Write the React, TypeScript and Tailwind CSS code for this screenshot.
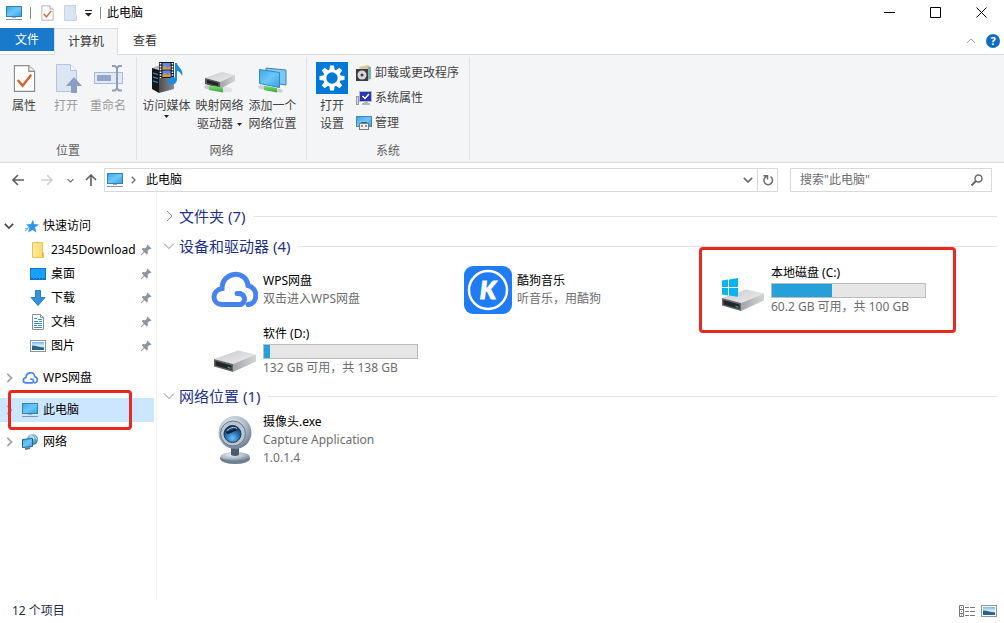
import type { ReactNode } from "react";
import clsx from "clsx";

type IconProps = { className?: string };

const Gradients = () => (
  <svg className="absolute w-0 h-0" aria-hidden="true">
    <defs>
      <linearGradient id="screen" x1="0" y1="0" x2="1" y2="1">
        <stop offset="0" stopColor="#3aa5ec" />
        <stop offset="0.5" stopColor="#6cc8f8" />
        <stop offset="1" stopColor="#35a0e6" />
      </linearGradient>
      <linearGradient id="driveTop" x1="0" y1="0" x2="1" y2="1">
        <stop offset="0" stopColor="#c9c9cb" />
        <stop offset="1" stopColor="#efeff0" />
      </linearGradient>
      <linearGradient id="driveSide" x1="0" y1="0" x2="1" y2="0">
        <stop offset="0" stopColor="#a4a5a8" />
        <stop offset="1" stopColor="#d3d4d6" />
      </linearGradient>
      <linearGradient id="pipe" x1="0" y1="0" x2="0" y2="1">
        <stop offset="0" stopColor="#86e07c" />
        <stop offset="1" stopColor="#2fa83a" />
      </linearGradient>
      <linearGradient id="folder" x1="0" y1="0" x2="1" y2="0">
        <stop offset="0" stopColor="#ffe9a0" />
        <stop offset="1" stopColor="#fbd867" />
      </linearGradient>
      <linearGradient id="photo" x1="0" y1="0" x2="0" y2="1">
        <stop offset="0" stopColor="#6db9ec" />
        <stop offset="0.5" stopColor="#dff1fa" />
        <stop offset="1" stopColor="#2a6a8c" />
      </linearGradient>
      <linearGradient id="tower" x1="0" y1="0" x2="1" y2="0">
        <stop offset="0" stopColor="#4a4d51" />
        <stop offset="1" stopColor="#8a8c90" />
      </linearGradient>
      <radialGradient id="camBody" cx="0.4" cy="0.3" r="0.75">
        <stop offset="0" stopColor="#eef3f7" />
        <stop offset="0.6" stopColor="#a9b6c3" />
        <stop offset="1" stopColor="#68798b" />
      </radialGradient>
      <radialGradient id="camLens" cx="0.5" cy="0.75" r="0.7">
        <stop offset="0" stopColor="#6cc1f5" />
        <stop offset="0.5" stopColor="#2a78bd" />
        <stop offset="1" stopColor="#12304f" />
      </radialGradient>
      <radialGradient id="globe" cx="0.4" cy="0.3" r="0.8">
        <stop offset="0" stopColor="#a9d8ee" />
        <stop offset="1" stopColor="#2a78a8" />
      </radialGradient>
    </defs>
  </svg>
);

const PcIcon = ({ className = "w-4 h-4" }: IconProps) => (
  <svg viewBox="0 0 16 16" className={className} aria-hidden="true">
    <rect x="0.5" y="1.5" width="15" height="10" fill="url(#screen)" stroke="#3a7fae" />
    <path d="M6 12h4v1H6z" fill="#8fb4cc" />
    <path d="M0 14.5h16" stroke="#7d97a8" />
  </svg>
);

const CheckPage = ({ className }: IconProps) => (
  <svg viewBox="0 0 24 30" className={className} aria-hidden="true">
    <path d="M1.5 1.5h15l6 6v21h-21z" fill="#fff" stroke="#8c8c8c" strokeWidth="1.2" />
    <path d="M16.5 1.5v6h6" fill="#eee" stroke="#8c8c8c" strokeWidth="1.2" />
    <path d="M5 16.5l5 6L19 11" fill="none" stroke="#e2622b" strokeWidth="2.6" />
  </svg>
);

const OpenIcon = () => (
  <svg viewBox="0 0 32 32" className="w-8 h-8" aria-hidden="true">
    <path d="M6.5 2.5h14l6 6v21h-20z" fill="#dce5f4" stroke="#b6c3dc" />
    <path d="M20.5 2.5v6h6" fill="#f3f6fb" stroke="#b6c3dc" />
    <path d="M24 15l8 9h-5v7h-6v-7h-5z" fill="#8d9fc1" />
  </svg>
);

const RenameIcon = () => (
  <svg viewBox="0 0 32 32" className="w-8 h-8" aria-hidden="true">
    <rect x="2.500" y="10.5" width="28" height="11" fill="#e3e9f4" stroke="#a9b8d3" />
    <rect x="5" y="13" width="14" height="6" fill="#93a5c8" />
    <path d="M20 4h3l2 2 2-2h3M25 5v22M20 28.500h3l2-2 2 2h3" fill="none" stroke="#8d9dbb" strokeWidth="2" />
  </svg>
);

const MediaIcon = () => (
  <svg viewBox="0 0 32 32" className="w-8 h-8" aria-hidden="true">
    <path d="M1 6l8-3 14 3-8 3z" fill="#b5b7ba" />
    <path d="M1 6l7 2v23l-7-4z" fill="#15171b" />
    <path d="M8 8h15v19L8 31z" fill="url(#tower)" />
    <path d="M2 11l5 1.500M2 15l5 1.500M2 19l5 1.500" stroke="#2f9de0" strokeWidth="1.2" />
    <rect x="8" y="0" width="15" height="16" fill="#15171b" />
    <path d="M9.500 1v15M21.500 1v15" stroke="#fff" strokeWidth="1.600" strokeDasharray="1.600 1.200" />
    <rect x="11.500" y="1" width="8" height="6.500" fill="#5b87e8" />
    <rect x="11.500" y="8.500" width="8" height="6.500" fill="#5b87e8" />
    <path d="M11.500 6l2-3 3 3 3-2v3.500h-8zM11.500 13l2-2 3 2 3-2v4h-8z" fill="#d59a3a" />
    <path d="M24 1h2c1 5 7 6 5 13-1-3-3-5-5-5v8c0 4-3 6-6 5.500s-4-3-2-5.500 4-2 6-1.500z" fill="#1b8de0" />
  </svg>
);

const MapDriveIcon = () => (
  <svg viewBox="0 0 32 32" className="w-8 h-8" aria-hidden="true">
    <path d="M1 16l17-6 13 3-15 7z" fill="url(#driveTop)" />
    <path d="M1 16l15 4v7L1 22z" fill="#55575a" />
    <path d="M3 18l11 3v3L3 21z" fill="#202224" />
    <path d="M16 20l15-7v6l-15 8z" fill="url(#driveSide)" />
    <path d="M2 25l20 3" stroke="#c5c8cb" strokeWidth="3.5" strokeLinecap="round" />
    <path d="M5 23.500l14 2v5L5 28z" fill="url(#pipe)" />
    <path d="M21 27l5 1" stroke="#dfe1e3" strokeWidth="4.500" strokeLinecap="round" />
  </svg>
);

const AddPlaceIcon = () => (
  <svg viewBox="0 0 32 32" className="w-8 h-8" aria-hidden="true">
    <path d="M9 6l20 2v15L9 20z" fill="#7cc9f5" stroke="#3b86ba" />
    <path d="M2.500 7.500l20 3v15l-20-4z" fill="url(#screen)" stroke="#3b86ba" />
    <path d="M3 25l21 4" stroke="#cdd0d2" strokeWidth="3.500" strokeLinecap="round" />
    <path d="M7 23.500l13 2.500v4.500L7 28z" fill="url(#pipe)" />
  </svg>
);

const SettingsIcon = () => (
  <svg viewBox="0 0 32 32" className="w-8 h-8" aria-hidden="true">
    <path d="M0 0h32v32H0z" fill="#0078d7" />
    <g transform="translate(16 16)">
      {[0, 45, 90, 135, 180, 225, 270, 315].map((deg) => (
        <path key={deg} d="M-2.800 -7l0.800 -5.500h4l0.800 5.500z" transform={`rotate(${deg})`} fill="#fff" />
      ))}
      <circle r="7.200" fill="none" stroke="#fff" strokeWidth="3" />
    </g>
  </svg>
);

const UninstallIcon = () => (
  <svg viewBox="0 0 16 16" className="w-4 h-4" aria-hidden="true">
    <path d="M3 2l9-2 3 2v12l-3 2z" fill="#d6c69a" />
    <path d="M12 2h3v12h-3z" fill="#7db4b0" />
    <rect x="0" y="4" width="12" height="12" fill="#3d3d3d" />
    <circle cx="6" cy="10" r="4.500" fill="#d9d9d9" />
    <circle cx="6" cy="10" r="1.500" fill="#3d3d3d" />
  </svg>
);

const SystemIcon = () => (
  <svg viewBox="0 0 16 16" className="w-4 h-4" aria-hidden="true">
    <rect x="0.500" y="6.500" width="2" height="8" fill="#d8d8d8" stroke="#9a9a9a" />
    <rect x="3.500" y="1.500" width="12" height="10" fill="#2a35b4" stroke="#b7bac2" />
    <path d="M6.500 6l2.500 2.500L13 4" fill="none" stroke="#fff" strokeWidth="1.500" />
    <path d="M8 12h4v1h2v2H6v-2h2z" fill="#b4b6bb" />
  </svg>
);

const ManageIcon = () => (
  <svg viewBox="0 0 16 16" className="w-4 h-4" aria-hidden="true">
    <rect x="0.500" y="1.500" width="15" height="10" fill="url(#screen)" stroke="#4a86ac" />
    <path d="M5.500 9V7.500h5V9" fill="none" stroke="#555" />
    <rect x="3.500" y="8.500" width="9" height="6" fill="#f0f0f0" stroke="#7a7a7a" />
    <path d="M6 10v2M10 10v2" stroke="#333" />
  </svg>
);

const Chevron = ({ className, dir }: IconProps & { dir: "right" | "down" | "up" }) => (
  <svg viewBox="0 0 12 12" className={className} fill="none" stroke="currentColor" aria-hidden="true">
    {dir === "right" && <path d="M4 1l5 5-5 5" />}
    {dir === "down" && <path d="M1 3.500l5 5 5-5" />}
    {dir === "up" && <path d="M1 8.500l5-5 5 5" />}
  </svg>
);

const Caret = () => (
  <svg viewBox="0 0 5 3" className="w-[5px] h-[3px]" aria-hidden="true">
    <path d="M0 0h5L2.500 3z" fill="#222" />
  </svg>
);

const StarIcon = () => (
  <svg viewBox="0 0 16 16" className="w-4 h-4" aria-hidden="true">
    <path d="M9 1.500l1 4.500 5 0.500-4 3 1.500 5L8.500 12 4 14.500l1.500-5L2 6.500 7 6z" fill="#2f96e8" />
    <path d="M1 13l4-4M1 10.500h3" stroke="#6cb7f0" strokeWidth="1.200" />
  </svg>
);

const FolderIcon = () => (
  <svg viewBox="0 0 16 16" className="w-4 h-4" aria-hidden="true">
    <path d="M2.500 0.500h10v9l1 1v5h-11z" fill="url(#folder)" stroke="#e8c45a" />
    <path d="M12.500 15.500v-5" stroke="#e3b94a" />
  </svg>
);

const DesktopIcon = () => (
  <svg viewBox="0 0 16 16" className="w-4 h-4" aria-hidden="true">
    <rect x="0.500" y="2.500" width="15" height="11" fill="#17a1fb" stroke="#1277c2" />
    <path d="M1 12.500h14" stroke="#0f66a8" strokeDasharray="2 1" />
  </svg>
);

const DownloadIcon = () => (
  <svg viewBox="0 0 16 16" className="w-4 h-4" aria-hidden="true">
    <path d="M5.500 0.500h5v7h4.500l-7 8-7-8h4.500z" fill="#3391e3" stroke="#2b7cc6" />
  </svg>
);

const DocIcon = () => (
  <svg viewBox="0 0 16 16" className="w-4 h-4" aria-hidden="true">
    <path d="M2.500 0.500h8l3 3v12h-11z" fill="#fff" stroke="#8b8f93" />
    <path d="M10.500 0.500v3h3" fill="none" stroke="#8b8f93" />
    <path d="M4 4.500h3M8 5.500h4M4 7.500h4M9 7.500h3M4 9.500h8M4 11.500h3M8 11.500h4M4 13.500h8" stroke="#2f93c8" />
  </svg>
);

const PictureIcon = () => (
  <svg viewBox="0 0 16 16" className="w-4 h-4" aria-hidden="true">
    <rect x="0.500" y="2.500" width="15" height="11" fill="#fff" stroke="#8a97a3" />
    <rect x="2" y="4" width="12" height="8" fill="url(#photo)" />
    <path d="M2 7.500c4 0 8 2 12 2V12H2z" fill="#2c6486" />
  </svg>
);

const CloudIcon = ({ className }: IconProps) => (
  <svg viewBox="0 0 48 48" className={className} fill="none" stroke="#4683ec" strokeWidth="5" strokeLinecap="round" aria-hidden="true">
    <path d="M30 38.500H12.500C1.500 38.500 1 24.500 12 22.500c0-17 24-19.500 26-3 11 3 10 18 0 19M27 27.500c8-1 10 8 4 11" />
  </svg>
);

const NetworkIcon = () => (
  <svg viewBox="0 0 16 16" className="w-4 h-4" aria-hidden="true">
    <circle cx="10.500" cy="5.500" r="5.500" fill="url(#globe)" />
    <path d="M8 1.500l3 1 1 2-3 1M13 2.500l2 3" fill="none" stroke="#d7edf3" />
    <path d="M0.500 5.500l10-1v8l-10 1z" fill="url(#screen)" stroke="#23628e" />
    <path d="M3 14l5-1v2l-5 1z" fill="#55768c" />
  </svg>
);

const PinIcon = () => (
  <svg viewBox="0 0 12 12" className="w-3 h-3" aria-hidden="true">
    <path d="M7.500 0.500l4 4-1.200 0.800-1-0.200-1.600 1.700 0.200 2.400L6.700 10.400 4.600 8.300 1 11.600l-0.500-0.500 3.300-3.600-2.200-2.200 1.200-1.200 2.400 0.200 1.700-1.600-0.200-1z" fill="#8b959d" />
  </svg>
);

const DriveIcon = ({ windows = false }: { windows?: boolean }) => (
  <svg viewBox="0 0 48 48" className="w-12 h-12" aria-hidden="true">
    <path d="M4 32l24-8.500 18 4L23 37z" fill="url(#driveTop)" />
    <path d="M4 32l19 5v8L4 39.500z" fill="#646669" />
    <path d="M5.500 34l16 4.500v4.500l-16-4.500z" fill="#222527" />
    <path d="M17.500 39.500l3 1v1.500l-3-1z" fill="#3aa455" />
    <path d="M23 37l23-9.500v7L23 45z" fill="url(#driveSide)" />
    {windows && (
      <path d="M4 14.500l6-1V21H4zM11 13.400l9-1.400v9h-9zM4 22h6v7.500l-6-1zM11 22h9v8.800l-9-1.200z" fill="#08b4ee" />
    )}
  </svg>
);

const KugouIcon = () => (
  <svg viewBox="0 0 48 48" className="w-12 h-12" aria-hidden="true">
    <rect width="48" height="48" rx="9" fill="#1f7cf5" />
    <circle cx="24" cy="24" r="19" fill="none" stroke="#fff" strokeWidth="2.500" />
    <text x="24" y="33" textAnchor="middle" fill="#fff" stroke="#fff" strokeWidth="1" className="font-['Lato'] text-[25px] font-black italic">K</text>
  </svg>
);

const WebcamIcon = () => (
  <svg viewBox="0 0 48 48" className="w-12 h-12" aria-hidden="true">
    <ellipse cx="25" cy="42.500" rx="15" ry="5.500" fill="#6f7f90" />
    <ellipse cx="25" cy="40.500" rx="14.500" ry="4.500" fill="url(#camBody)" />
    <path d="M21 31h8v8q-4 2-8 0z" fill="#4c5b6b" />
    <circle cx="25" cy="16.500" r="16.500" fill="url(#camBody)" />
    <circle cx="23" cy="17.500" r="12.500" fill="#b9c6d2" stroke="#617589" />
    <circle cx="22.500" cy="18" r="8.500" fill="url(#camLens)" stroke="#24384c" />
    <path d="M16.500 16c3 2 5-2 10-2.500" fill="none" stroke="#0e2136" strokeWidth="2.500" />
    <path d="M17 14.500c3-3 7-4 10-2" fill="none" stroke="#a9d8f5" />
  </svg>
);

type RibbonButtonProps = {
  icon: ReactNode;
  lines: string[];
  caret?: "below" | "inline";
  disabled?: boolean;
  className?: string;
};

const RibbonButton = ({ icon, lines, caret, disabled, className = "w-[42px]" }: RibbonButtonProps) => (
  <button
    disabled={disabled}
    className={clsx("flex flex-col items-center pt-[5px] whitespace-nowrap", disabled ? "text-[#9b9b9b]" : "text-[#444]", className)}
  >
    <span className="h-[35px]">{icon}</span>
    {lines.map((line, i) => (
      <span key={line} className="flex items-center gap-1">
        {line}
        {caret === "inline" && i === lines.length - 1 && <Caret />}
      </span>
    ))}
    {caret === "below" && <Caret />}
  </button>
);

const RibbonGroup = ({ title, children }: { title: string; children: ReactNode }) => (
  <section className="my-0.5 flex flex-col justify-between border-r border-[#e0e2e4]">
    <div className="flex items-start">{children}</div>
    <h2 className="text-center text-[#5f5f5f]">{title}</h2>
  </section>
);

const systemActions = [
  { label: "卸载或更改程序", icon: <UninstallIcon /> },
  { label: "系统属性", icon: <SystemIcon /> },
  { label: "管理", icon: <ManageIcon /> },
];

const quickAccess = [
  { label: "2345Download", icon: <FolderIcon /> },
  { label: "桌面", icon: <DesktopIcon /> },
  { label: "下载", icon: <DownloadIcon /> },
  { label: "文档", icon: <DocIcon /> },
  { label: "图片", icon: <PictureIcon /> },
];

const places = [
  { label: "WPS网盘", icon: <CloudIcon className="w-4 h-4" /> },
  { label: "此电脑", icon: <PcIcon />, active: true },
  { label: "网络", icon: <NetworkIcon /> },
];

type Entry = {
  name: string;
  lines: string[];
  icon: ReactNode;
  used?: number;
  marked?: boolean;
};

const devices: Entry[] = [
  { name: "WPS网盘", lines: ["双击进入WPS网盘"], icon: <CloudIcon className="w-12 h-12" /> },
  { name: "酷狗音乐", lines: ["听音乐，用酷狗"], icon: <KugouIcon /> },
  { name: "本地磁盘 (C:)", lines: ["60.2 GB 可用，共 100 GB"], icon: <DriveIcon windows />, used: 39, marked: true },
  { name: "软件 (D:)", lines: ["132 GB 可用，共 138 GB"], icon: <DriveIcon />, used: 4 },
];

const networkPlaces: Entry[] = [
  { name: "摄像头.exe", lines: ["Capture Application", "1.0.1.4"], icon: <WebcamIcon /> },
];

const EntryTile = ({ name, lines, icon, used, marked }: Entry) => (
  <li className="relative flex h-[54px] items-center gap-[5px]">
    {icon}
    <div>
      <p className="text-black">{name}</p>
      {used !== undefined && (
        <div className="mt-px h-[15px] w-[155px] border border-[#bcbcbc] bg-[#e6e6e6]">
          <div className="h-full bg-[#26a0da]" style={{ width: `${used}%` }} />
        </div>
      )}
      {lines.map((line) => (
        <p key={line} className="text-[#6d6d6d]">{line}</p>
      ))}
    </div>
    {marked && <span className="absolute -inset-y-4 right-4 -left-[19px] rounded-sm border-3 border-[#e8291f]" />}
  </li>
);

const FileGroup = ({ title, items, open = true }: { title: string; items: Entry[]; open?: boolean }) => (
  <section>
    <button className="flex h-7 w-full items-center gap-1 text-[15px] text-[#1e3287]" aria-expanded={open}>
      <Chevron dir={open ? "down" : "right"} className="h-3 w-3 text-[#8a8a8a]" />
      {title}
      <span className="ml-1 h-px flex-1 bg-[#e2e2e2]" />
    </button>
    {open && (
      <ul className="grid grid-cols-[repeat(auto-fill,254px)] gap-y-[7px] pt-[3px] pb-0.5 pl-[47px]">
        {items.map((item) => (
          <EntryTile key={item.name} {...item} />
        ))}
      </ul>
    )}
  </section>
);

const TitleBar = () => (
  <header className="flex h-7 items-start justify-between">
    <div className="flex h-[26px] items-center pl-1.5 text-black">
      <PcIcon />
      <span className="mx-2 h-3 w-px bg-[#8a8a8a]" />
      <button aria-label="属性" className="ml-0.5">
        <CheckPage className="h-4 w-[13px]" />
      </button>
      <button aria-label="打开" className="ml-2.5">
        <svg viewBox="0 0 13 16" className="h-4 w-[13px]" aria-hidden="true">
          <path d="M0.500 0.500h11v9l1 1v5h-12z" fill="#dbe4f2" stroke="#c5d2e8" />
        </svg>
      </button>
      <button aria-label="自定义快速访问工具栏" className="ml-2">
        <svg viewBox="0 0 7 7" className="h-[7px] w-[7px]" aria-hidden="true">
          <path d="M0 0h7v1H0zM0 3h7L3.500 6.500z" fill="#222" />
        </svg>
      </button>
      <span className="mr-1.5 ml-2 h-3 w-px bg-[#8a8a8a]" />
      <h1>此电脑</h1>
    </div>
    <div className="flex text-black">
      <button aria-label="最小化" className="grid h-6 w-[46px] place-items-center">
        <svg viewBox="0 0 11 11" className="h-[11px] w-[11px]"><path d="M0 5.500h11" stroke="currentColor" /></svg>
      </button>
      <button aria-label="最大化" className="grid h-6 w-[46px] place-items-center">
        <svg viewBox="0 0 11 11" className="h-[11px] w-[11px]"><path d="M0.500 0.500h10v10h-10z" fill="none" stroke="currentColor" /></svg>
      </button>
      <button aria-label="关闭" className="grid h-6 w-[46px] place-items-center">
        <svg viewBox="0 0 11 11" className="h-[11px] w-[11px]"><path d="M0.500 0.500l10 10M10.500 0.500l-10 10" stroke="currentColor" /></svg>
      </button>
    </div>
  </header>
);

const Ribbon = () => (
  <>
    <div className="flex h-[27px] border-b border-[#d9dadb] text-[#333]">
      <button className="h-[23px] w-[54px] bg-[#1979ca] text-white">文件</button>
      <button className="-mb-px h-[27px] w-16 border border-b-0 border-[#dcdddf] bg-[#f4f5f7]">计算机</button>
      <button className="h-[26px] w-[54px]">查看</button>
      <div className="ml-auto flex items-center gap-2.5 pr-1">
        <button aria-label="最小化功能区">
          <Chevron dir="up" className="h-2.5 w-2.5 text-[#8a8a8a]" />
        </button>
        <button className="h-3.5 w-3.5 rounded-full bg-[#0f6cc0] text-[11px] leading-[14px] font-bold text-white">?</button>
      </div>
    </div>
    <div className="flex h-[108px] border-b border-[#d9dadb] bg-[#f4f5f7]">
      <RibbonGroup title="位置">
        <div className="flex pr-[7px] pl-[3px]">
          <RibbonButton icon={<CheckPage className="mt-0.5 h-[29px] w-[23px]" />} lines={["属性"]} />
          <RibbonButton icon={<OpenIcon />} lines={["打开"]} disabled />
          <RibbonButton icon={<RenameIcon />} lines={["重命名"]} disabled />
        </div>
      </RibbonGroup>
      <RibbonGroup title="网络">
        <div className="flex items-start pr-[7px] pl-[3px]">
          <RibbonButton icon={<MediaIcon />} lines={["访问媒体"]} caret="below" className="w-[53px]" />
          <RibbonButton icon={<MapDriveIcon />} lines={["映射网络", "驱动器"]} caret="inline" className="w-[53px]" />
          <RibbonButton icon={<AddPlaceIcon />} lines={["添加一个", "网络位置"]} className="w-[53px]" />
        </div>
      </RibbonGroup>
      <RibbonGroup title="系统">
        <div className="flex items-start gap-[3px] pr-2.5 pl-1">
          <RibbonButton icon={<SettingsIcon />} lines={["打开", "设置"]} />
          <div className="flex flex-col pt-[3px] text-[#444]">
            {systemActions.map(({ label, icon }) => (
              <button key={label} className="flex h-[25px] items-center gap-[3px]">
                {icon}
                {label}
              </button>
            ))}
          </div>
        </div>
      </RibbonGroup>
    </div>
  </>
);

const AddressBar = () => (
  <div className="flex items-center px-3 pt-[5px] text-[#6b6b6b]">
    <div className="flex w-[92px] items-center">
      <button aria-label="后退">
        <svg viewBox="0 0 12 12" className="h-3 w-3" fill="none" stroke="#5f5f5f" strokeWidth="1.600"><path d="M12 6H1M6 1L1 6l5 5" /></svg>
      </button>
      <button aria-label="前进" className="ml-[17px]" disabled>
        <svg viewBox="0 0 12 12" className="h-3 w-3" fill="none" stroke="#cfcfcf" strokeWidth="1.600"><path d="M0 6h11M6 1l5 5-5 5" /></svg>
      </button>
      <button aria-label="最近浏览的位置" className="ml-3.5">
        <Chevron dir="down" className="h-[7px] w-[7px] stroke-2" />
      </button>
      <button aria-label="上移" className="ml-[11px]">
        <svg viewBox="0 0 12 12" className="h-3 w-3" fill="none" stroke="#5f5f5f" strokeWidth="1.600"><path d="M6 12V1M1 6l5-5 5 5" /></svg>
      </button>
    </div>
    <div className="flex h-6 flex-1 items-center border border-[#d9d9d9] pl-0.5">
      <PcIcon />
      <Chevron dir="right" className="ml-1.5 h-2 w-2 stroke-2" />
      <button className="ml-[9px] text-black">此电脑</button>
      <button aria-label="以前的位置" className="mr-1 ml-auto">
        <Chevron dir="down" className="h-2.5 w-2.5 stroke-2" />
      </button>
      <button aria-label="刷新" className="grid h-full w-5 place-items-center border-l border-[#d9d9d9]">
        <svg viewBox="0 0 12 12" className="h-3 w-3" fill="none" stroke="currentColor" strokeWidth="1.500">
          <path d="M8.500 2.700A4.300 4.300 0 1 1 4.500 2.400M1.500 1.700h4V5.500" />
        </svg>
      </button>
    </div>
    <div className="ml-3 flex h-6 w-[202px] items-center border border-[#d9d9d9] pr-2 pl-[9px]">
      <input type="search" aria-label="搜索" placeholder={'搜索"此电脑"'} className="min-w-0 flex-1 outline-none placeholder:text-[#6d6d6d]" />
      <svg viewBox="0 0 12 12" className="h-3 w-3" fill="none" stroke="currentColor" strokeWidth="1.500" aria-hidden="true">
        <circle cx="7.500" cy="4.500" r="3.500" />
        <path d="M5 7L0.500 11.500" strokeWidth="2" />
      </svg>
    </div>
  </div>
);

const Sidebar = () => (
  <nav className="w-[157px] shrink-0 border-r border-[#f3f3f3] pt-[22px] pr-0.5 text-black">
    <a href="#quick" className="flex h-6 items-center pl-1">
      <Chevron dir="down" className="mr-2.5 h-2.5 w-2.5 stroke-2 text-[#4a4a4a]" />
      <StarIcon />
      <span className="ml-[3px]">快速访问</span>
    </a>
    <ul>
      {quickAccess.map(({ label, icon }) => (
        <li key={label}>
          <a href="#quick" className="flex h-6 items-center pr-0.5 pl-[30px]">
            {icon}
            <span className="ml-[5px]">{label}</span>
            <span className="ml-auto"><PinIcon /></span>
          </a>
        </li>
      ))}
    </ul>
    <ul className="mt-2 space-y-2">
      {places.map(({ label, icon, active }) => (
        <li key={label} className="relative">
          <a href="#place" className={clsx("flex h-6 items-center pl-1", active && "bg-[#cde6ff]")}>
            <Chevron dir="right" className="mr-2 h-2.5 w-2.5 stroke-2 text-[#a0a0a0]" />
            {icon}
            <span className="ml-[5px]">{label}</span>
          </a>
          {active && <span className="absolute -inset-y-2 right-[22px] left-2 rounded-sm border-3 border-[#e8291f]" />}
        </li>
      ))}
    </ul>
  </nav>
);

const StatusBar = () => (
  <footer className="flex h-6 items-center justify-between pr-[7px] pl-3 text-[#1f2d4a]">
    <span>12 个项目</span>
    <div className="flex items-center gap-1.5">
      <button aria-label="详细信息">
        <svg viewBox="0 0 16 12" className="h-3 w-4" fill="none" stroke="#777">
          <path d="M0.500 0.500h4v11h-4zM0.500 4.500h4M0.500 8.500h4M2 2.500h1M2 6.500h1M2 10h1M6 2.500h4M11 2.500h5M6 6.500h4M11 6.500h5M6 10.500h4M11 10.500h5" />
        </svg>
      </button>
      <button aria-label="大缩略图">
        <PictureIcon />
      </button>
    </div>
  </footer>
);

const App = () => {
  return (
    <div className="flex min-h-screen flex-col bg-white font-['Noto_Sans','Noto_Sans_CJK_SC',sans-serif] text-[12px] leading-[18px]">
      <Gradients />
      <TitleBar />
      <Ribbon />
      <AddressBar />
      <div className="flex flex-1">
        <Sidebar />
        <main className="flex-1 space-y-0.5 pt-2.5 pr-[7px] pl-1.5">
          <FileGroup title="文件夹 (7)" items={[]} open={false} />
          <FileGroup title="设备和驱动器 (4)" items={devices} />
          <FileGroup title="网络位置 (1)" items={networkPlaces} />
        </main>
      </div>
      <StatusBar />
    </div>
  );
};

export default App;
